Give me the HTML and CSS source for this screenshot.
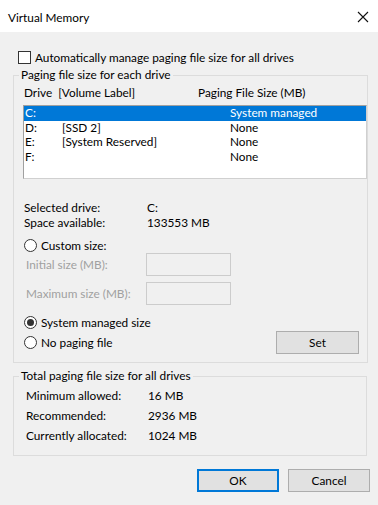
FILE: index.html
```html
<!DOCTYPE html>
<html lang="en">
<head>
<meta charset="UTF-8">
<meta name="viewport" content="width=device-width, initial-scale=1.0">
<title>Virtual Memory</title>
<link rel="stylesheet" href="styles.css">
</head>
<body>

<div class="dialog">
  <div class="titlebar">
    <span class="title">Virtual Memory</span>
    <svg class="close" width="12" height="12" viewBox="0 0 12 12">
      <path d="M1 1 L11 11 M11 1 L1 11" stroke="#111" stroke-width="1.1" fill="none"/>
    </svg>
  </div>

  <div class="content">
    <div class="check-row">
      <span class="checkbox"></span>
      <span>Automatically manage paging file size for all drives</span>
    </div>

    <fieldset class="group group-drives">
      <legend>Paging file size for each drive</legend>
      <div class="list-head">
        <span class="col-drive">Drive&nbsp; [Volume Label]</span>
        <span class="col-size">Paging File Size (MB)</span>
      </div>
      <div class="listbox">
        <div class="list-row selected">
          <span class="col-letter">C:</span><span class="col-label"></span><span class="col-value">System managed</span>
        </div>
        <div class="list-row">
          <span class="col-letter">D:</span><span class="col-label">[SSD 2]</span><span class="col-value">None</span>
        </div>
        <div class="list-row">
          <span class="col-letter">E:</span><span class="col-label">[System Reserved]</span><span class="col-value">None</span>
        </div>
        <div class="list-row">
          <span class="col-letter">F:</span><span class="col-label"></span><span class="col-value">None</span>
        </div>
      </div>

      <div class="info">
        <div class="info-row"><span class="info-key">Selected drive:</span><span>C:</span></div>
        <div class="info-row"><span class="info-key">Space available:</span><span>133553 MB</span></div>
      </div>

      <div class="radio-row custom">
        <span class="radio"></span><span>Custom size:</span>
      </div>
      <div class="field-row first">
        <span class="field-label">Initial size (MB):</span>
        <span class="textbox"></span>
      </div>
      <div class="field-row">
        <span class="field-label">Maximum size (MB):</span>
        <span class="textbox"></span>
      </div>

      <div class="radio-row managed">
        <span class="radio checked"></span><span>System managed size</span>
      </div>
      <div class="last-row">
        <div class="radio-row">
          <span class="radio"></span><span>No paging file</span>
        </div>
        <button class="btn set">Set</button>
      </div>
    </fieldset>

    <fieldset class="group group-total">
      <legend>Total paging file size for all drives</legend>
      <div class="total-row first"><span class="total-key">Minimum allowed:</span><span>16 MB</span></div>
      <div class="total-row"><span class="total-key">Recommended:</span><span>2936 MB</span></div>
      <div class="total-row"><span class="total-key">Currently allocated:</span><span>1024 MB</span></div>
    </fieldset>

    <div class="buttons">
      <button class="btn default">OK</button>
      <button class="btn">Cancel</button>
    </div>
  </div>
</div>

</body>
</html>
```

FILE: styles.css
```css
body {
  margin: 0;
  font-family: Lato, "Liberation Sans", sans-serif;
  font-size: 11.8px;
  color: #000;
  background: #f0f0f0;
}
.dialog {
  width: 378px;
  height: 505px;
}
.titlebar {
  height: 32px;
  background: #fff;
  display: flex;
  align-items: center;
  justify-content: space-between;
  padding: 0 8px 0 8px;
  box-sizing: border-box;
}
.title {
  margin-top: 2px;
}
.close {
  margin-right: 1px;
  margin-top: 2px;
}
.content {
  padding: 17px 0 0 13px;
}
.check-row {
  display: flex;
  align-items: center;
  height: 16px;
  padding-left: 5px;
  gap: 4px;
}
.checkbox {
  width: 11px;
  height: 11px;
  border: 1px solid #333;
  background: #fff;
}
.group {
  margin: 2px 0 0 0;
  padding: 0;
  width: 354px;
  box-sizing: border-box;
  border: 1px solid #dcdcdc;
}
.group legend {
  margin-left: 5px;
  padding: 0 2px;
  line-height: 16px;
}
.list-head {
  display: flex;
  height: 14px;
  line-height: 14px;
  margin-top: 3px;
  padding-left: 10px;
}
.col-drive {
  width: 174px;
}
.listbox {
  margin: 5px 0 0 9px;
  width: 344px;
  height: 74px;
  box-sizing: border-box;
  background: #fff;
  border: 1px solid #a0a0a0;
  border-right-color: #d0d0d0;
  border-bottom-color: #d0d0d0;
  padding: 0;
}
.list-row {
  display: flex;
  height: 14.5px;
  line-height: 14.5px;
  padding-left: 1px;
}
.list-row.selected {
  background: #0078d7;
  color: #fff;
}
.col-letter {
  width: 37px;
}
.col-label {
  width: 168px;
}
.info {
  margin-top: 21px;
  padding-left: 10px;
}
.info-row {
  display: flex;
  height: 15px;
  line-height: 15px;
}
.info-key {
  width: 123px;
}
.radio-row {
  display: flex;
  align-items: center;
  gap: 4px;
  height: 16px;
  padding-left: 10px;
}
.radio-row.custom {
  margin-top: 7px;
}
.radio {
  width: 11px;
  height: 11px;
  border: 1px solid #333;
  border-radius: 50%;
  background: #fff;
  display: flex;
  align-items: center;
  justify-content: center;
}
.radio.checked::after {
  content: "";
  width: 7px;
  height: 7px;
  border-radius: 50%;
  background: #333;
}
.field-row {
  display: flex;
  align-items: center;
  height: 23px;
  padding-left: 12px;
  margin-top: 6px;
  color: #a0a0a0;
}
.field-row.first {
  margin-top: 0;
}
.field-label {
  width: 120px;
}
.textbox {
  width: 85px;
  height: 23px;
  box-sizing: border-box;
  border: 1px solid #cccccc;
  background: #f0f0f0;
}
.radio-row.managed {
  margin-top: 9px;
}
.last-row {
  display: flex;
  justify-content: space-between;
  align-items: center;
  margin-top: 1px;
  margin-bottom: 8px;
  padding-right: 8px;
  height: 23px;
}
.btn {
  font-family: inherit;
  font-size: 11.8px;
  color: #000;
  width: 82px;
  height: 23px;
  background: #e1e1e1;
  border: 1px solid #adadad;
  padding: 0;
}
.btn.set {
  width: 83px;
}
.group-total {
  margin-top: 5px;
  padding-bottom: 9px;
}
.total-row {
  display: flex;
  height: 20px;
  line-height: 20px;
  padding-left: 12px;
}
.total-row.first {
  margin-top: 2px;
}
.total-key {
  width: 122px;
}
.buttons {
  display: flex;
  justify-content: flex-end;
  gap: 9px;
  width: 357px;
  margin-top: 13px;
}
.btn.default {
  border: 1px solid #0078d7;
  box-shadow: inset 0 0 0 1px #0078d7;
}
```
